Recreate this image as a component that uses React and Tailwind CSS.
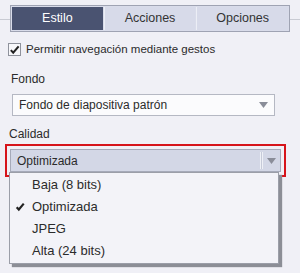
import { useState } from "react";

const font = { fontFamily: '"Liberation Sans", Arial, sans-serif' };

const Arrow = () => (
  <svg width="9" height="6" viewBox="0 0 9 6">
    <path d="M0 0h9L4.5 6z" fill="#8a8d99" />
  </svg>
);

const Check = ({ size = 12, w = 2.2 }) => (
  <svg width={size} height={size} viewBox="0 0 12 12">
    <path
      d="M2 6.2l2.6 2.8L10.5 2"
      fill="none"
      stroke="#222"
      strokeWidth={w}
    />
  </svg>
);

const tabs = ["Estilo", "Acciones", "Opciones"];
const options = ["Baja (8 bits)", "Optimizada", "JPEG", "Alta (24 bits)"];

const App = () => {
  const [tab, setTab] = useState(0);
  const [quality, setQuality] = useState(1);

  return (
    <div
      className="w-[300px] h-[273px] bg-[#f0f0f6] text-[#2b2b2b] text-[12px] overflow-hidden"
      style={font}
    >
      <div className="flex items-center pt-[5px]">
        <div className="w-[10px] h-px bg-[#c9cbd3] mt-[1px]" />
        <div className="flex w-[280px] h-[27px] border border-[#9fa3b3] bg-[#d9dcea] p-[1px] gap-[1px]">
          {tabs.map((t, i) => (
            <button
              key={t}
              onClick={() => setTab(i)}
              className={
                "flex-1 flex items-center justify-center text-[12.5px] " +
                (tab === i
                  ? "bg-[#4a5371] text-white"
                  : "bg-[#d7dae9] text-[#333] border-l border-[#eceef6]")
              }
            >
              {t}
            </button>
          ))}
        </div>
        <div className="flex-1 h-px bg-[#c9cbd3] mt-[1px]" />
      </div>

      <label className="flex items-center gap-[5px] pl-[8px] mt-[11px] h-[13px]">
        <span className="w-[13px] h-[13px] border border-[#8f929c] bg-[#f7f7fa] flex items-center justify-center">
          <Check size={12} />
        </span>
        <span className="text-[11.5px]">Permitir navegación mediante gestos</span>
      </label>

      <div className="pl-[11px] mt-[16px] leading-[14px]">Fondo</div>
      <div className="ml-[12px] mt-[8px] w-[263px] h-[22px] border border-[#b5b8c3] bg-[#fbfbfd] flex items-center justify-between pl-[6px] pr-[6px]">
        <span>Fondo de diapositiva patrón</span>
        <Arrow />
      </div>

      <div className="pl-[9px] mt-[11px] leading-[14px]">Calidad</div>

      <div className="relative ml-[5px] mt-[3px] w-[281px] h-[33px] border-2 border-[#d6141b] p-[3px]">
        <div className="h-full border border-[#a6aab9] bg-[#d3d7e6] flex items-center">
          <span className="flex-1 pl-[6px]">{options[quality]}</span>
          <div className="w-[3px] h-[17px] border-x border-[#eef0f6] bg-[#c6cad8]" />
          <div className="w-[17px] flex justify-center">
            <Arrow />
          </div>
        </div>

        <ul className="absolute left-[2px] top-[26px] w-[270px] h-[92px] border border-[#9b9ea8] bg-[#f3f3f8] shadow-[3px_3px_1px_#8c8e96] pt-[1px]">
          {options.map((o, i) => (
            <li
              key={o}
              onClick={() => setQuality(i)}
              className="h-[22px] flex items-center text-[13px] cursor-default"
            >
              <span className="w-[22px] flex pl-[5px]">
                {quality === i && <Check size={10} w={2.6} />}
              </span>
              <span>{o}</span>
            </li>
          ))}
        </ul>
      </div>
    </div>
  );
};

export default App;
